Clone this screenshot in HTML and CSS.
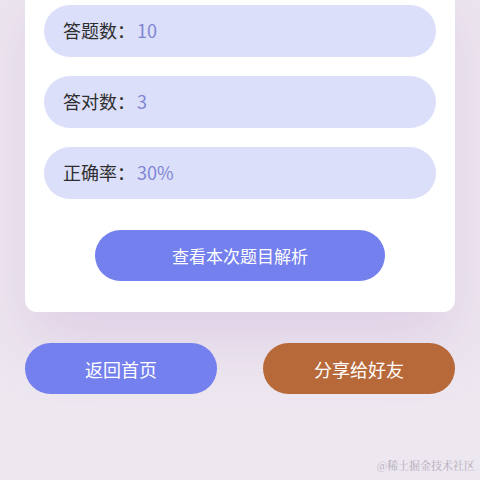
FILE: index.html
```html
<!DOCTYPE html>
<html lang="zh">
<head>
  <meta charset="UTF-8">
  <title>答题结果</title>
  <link rel="stylesheet" href="styles.css">
</head>
<body>
  <div class="page">
    <div class="card">
      <div class="stat"><span class="label">答题数：</span><span class="value">10</span></div>
      <div class="stat"><span class="label">答对数：</span><span class="value">3</span></div>
      <div class="stat"><span class="label">正确率：</span><span class="value">30%</span></div>
      <button class="btn btn-review">查看本次题目解析</button>
    </div>

    <div class="actions">
      <button class="btn btn-home">返回首页</button>
      <button class="btn btn-share">分享给好友</button>
    </div>
  </div>

  <div class="watermark">@稀土掘金技术社区</div>
</body>
</html>
```

FILE: styles.css
```css
html, body {
  margin: 0;
  height: 100%;
}

body {
  font-family: "Noto Sans CJK SC", "Noto Sans", sans-serif;
  background: #ede7f0;
  overflow: hidden;
  position: relative;
}

.page {
  padding: 0 25px;
}

.card {
  margin-top: -20px;
  background: #fff;
  border-radius: 12px;
  padding: 25px 19px 31px;
  display: flex;
  flex-direction: column;
  gap: 19px;
  box-shadow: 0 30px 60px rgba(190, 150, 200, 0.28);
}

.stat {
  height: 52px;
  border-radius: 26px;
  background: #dcdffa;
  display: flex;
  align-items: center;
  padding-left: 19px;
  padding-bottom: 2px;
  box-sizing: border-box;
  font-size: 18px;
}

.label {
  color: #2e2e2e;
}

.value {
  margin-left: 2px;
  color: #7f86d2;
}

.btn {
  height: 51px;
  border: none;
  border-radius: 26px;
  color: #fff;
  font-family: inherit;
  font-size: 18px;
  cursor: pointer;
}

.btn-review {
  align-self: center;
  width: 290px;
  margin-top: 12px;
  font-size: 17px;
  background: #7480ee;
}

.actions {
  margin-top: 31px;
  display: flex;
  justify-content: space-between;
}

.btn-home,
.btn-share {
  width: 192px;
}

.btn-home {
  background: #7480ee;
}

.btn-share {
  background: #b8693a;
}

.watermark {
  position: absolute;
  right: 5px;
  bottom: 7px;
  font-family: "Noto Serif CJK SC", "Liberation Serif", "Noto Sans CJK SC", serif;
  font-size: 11px;
  color: #b3adb8;
}
```
